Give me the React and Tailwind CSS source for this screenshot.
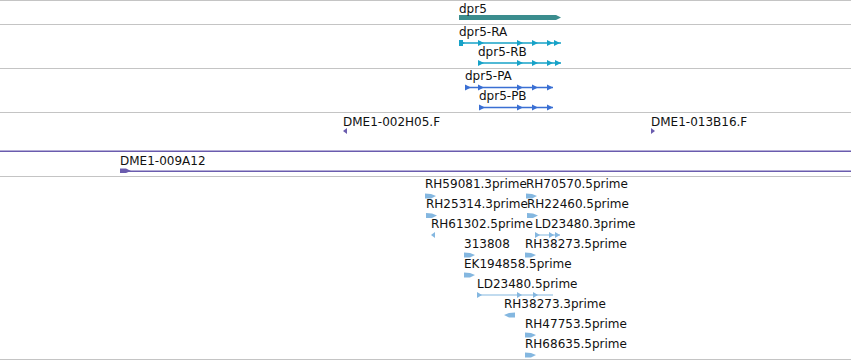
import React from "react";

const tri = (x, y, w = 6, h = 3) => `${x},${y - h} ${x + w},${y} ${x},${y + h}`;
const triL = (x, y, w = 5, h = 3) => `${x + w},${y - h} ${x},${y} ${x + w},${y + h}`;
const est = (x, y) => `${x},${y - 2.5} ${x + 6},${y - 2} ${x + 11},${y} ${x + 6},${y + 2.5} ${x},${y + 2.5}`;
const estL = (x, y) => `${x + 11},${y - 2.5} ${x + 5},${y - 2} ${x},${y} ${x + 5},${y + 2.5} ${x + 11},${y + 2.5}`;

const lbl = "absolute text-[12px] leading-[14px] text-[#111] whitespace-nowrap";

function Transcript({ x1, x2, y, marks, color }) {
  return (
    <g fill={color} stroke="none">
      <rect x={x1} y={y - 0.75} width={x2 - x1} height={1.5} />
      {marks.map((m, i) => (
        <polygon key={i} points={tri(m, y, 6, 3)} />
      ))}
    </g>
  );
}

export default function App() {
  const cyan = "#17a2c8";
  const blue = "#3a6fd3";
  const purple = "#6a5cae";
  const lb = "#84b7e0";
  return (
    <div className="flex flex-col w-[851px] h-[360px] bg-white overflow-hidden border-t border-[#c4c4c4] font-['DejaVu_Sans','Liberation_Sans',sans-serif]">
      {/* gene track */}
      <div className="relative h-[24px] shrink-0 border-b border-[#c4c4c4]">
        <svg className="absolute inset-0" width="851" height="23" viewBox="0 1 851 23">
          <polygon points="459,15 556,15 561,17.5 556,20 459,20" fill="#3b8d8e" />
        </svg>
        <div className={`${lbl} left-[459px] top-[1px]`}>dpr5</div>
      </div>

      {/* transcripts */}
      <div className="relative h-[44px] shrink-0 border-b border-[#c4c4c4]">
        <svg className="absolute inset-0" width="851" height="43" viewBox="0 25 851 43">
          <Transcript x1={459} x2={561} y={43} color={cyan} marks={[459, 478, 517, 532, 547, 554]} />
          <rect x={459} y={40} width={4} height={6} fill={cyan} />
          <Transcript x1={478} x2={561} y={63} color={cyan} marks={[478, 517, 532, 547, 555]} />
        </svg>
        <div className={`${lbl} left-[459px] top-0`}>dpr5-RA</div>
        <div className={`${lbl} left-[478px] top-[20px]`}>dpr5-RB</div>
      </div>

      {/* polypeptides */}
      <div className="relative h-[44px] shrink-0 border-b border-[#c4c4c4]">
        <svg className="absolute inset-0" width="851" height="43" viewBox="0 69 851 43">
          <Transcript x1={465} x2={553} y={87.5} color={blue} marks={[465, 478, 517, 532, 547]} />
          <Transcript x1={479} x2={553} y={107.5} color={blue} marks={[479, 517, 532, 547]} />
        </svg>
        <div className={`${lbl} left-[465px] top-0`}>dpr5-PA</div>
        <div className={`${lbl} left-[479px] top-[20px]`}>dpr5-PB</div>
      </div>

      {/* BAC / clone ends */}
      <div className="relative h-[64px] shrink-0 border-b border-[#c4c4c4]">
        <svg className="absolute inset-0" width="851" height="63" viewBox="0 113 851 63">
          <polygon points={triL(343, 131, 4, 3)} fill={purple} />
          <polygon points={tri(651, 131, 4, 3)} fill={purple} />
          <rect x={0} y={150.5} width={851} height={1.5} fill={purple} />
          <rect x={120} y={170.5} width={731} height={1.5} fill={purple} />
          <polygon points="120,168.5 126,168.5 131,171 126,173 120,173" fill={purple} />
        </svg>
        <div className={`${lbl} left-[343px] top-[2px]`}>DME1-002H05.F</div>
        <div className={`${lbl} left-[651px] top-[2px]`}>DME1-013B16.F</div>
        <div className={`${lbl} left-[120px] top-[41px]`}>DME1-009A12</div>
      </div>

      {/* ESTs */}
      <div className="relative h-[183px] shrink-0 border-b border-[#c4c4c4]">
        <svg className="absolute inset-0" width="851" height="182" viewBox="0 177 851 182">
          <g fill={lb}>
            <polygon points={est(425, 196)} />
            <polygon points={est(526, 196)} />
            <polygon points={est(426, 215.5)} />
            <polygon points={est(527, 215.5)} />
            <polygon points={triL(431, 235, 4, 3)} />
            <rect x={535} y={234.5} width={25} height={1} />
            <polygon points={tri(535, 235, 5, 3)} />
            <polygon points={tri(549, 235, 5, 3)} />
            <polygon points={tri(555, 235, 5, 3)} />
            <polygon points={est(464, 255)} />
            <polygon points={est(525, 255)} />
            <polygon points={est(464, 275)} />
            <rect x={477} y={294.5} width={76} height={1} />
            <polygon points={tri(477, 295, 5, 3)} />
            <polygon points={tri(517, 295, 5, 3)} />
            <polygon points={tri(533, 295, 5, 3)} />
            <polygon points={estL(504, 315)} />
            <polygon points={est(525, 335)} />
            <polygon points={est(525, 355)} />
          </g>
        </svg>
        <div className={`${lbl} left-[425px] top-0`}>RH59081.3prime</div>
        <div className={`${lbl} left-[526px] top-0`}>RH70570.5prime</div>
        <div className={`${lbl} left-[426px] top-[20px]`}>RH25314.3prime</div>
        <div className={`${lbl} left-[527px] top-[20px]`}>RH22460.5prime</div>
        <div className={`${lbl} left-[431px] top-[40px]`}>RH61302.5prime</div>
        <div className={`${lbl} left-[535px] top-[40px]`}>LD23480.3prime</div>
        <div className={`${lbl} left-[464px] top-[60px]`}>313808</div>
        <div className={`${lbl} left-[525px] top-[60px]`}>RH38273.5prime</div>
        <div className={`${lbl} left-[464px] top-[80px]`}>EK194858.5prime</div>
        <div className={`${lbl} left-[477px] top-[100px]`}>LD23480.5prime</div>
        <div className={`${lbl} left-[504px] top-[120px]`}>RH38273.3prime</div>
        <div className={`${lbl} left-[525px] top-[140px]`}>RH47753.5prime</div>
        <div className={`${lbl} left-[525px] top-[160px]`}>RH68635.5prime</div>
      </div>
    </div>
  );
}
